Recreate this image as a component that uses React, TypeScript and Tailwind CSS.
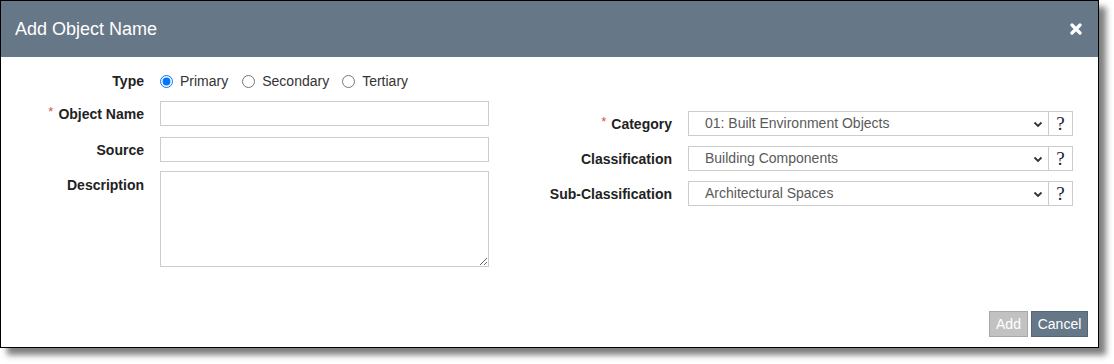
import React from "react"

const font = { fontFamily: '"Liberation Sans", Arial, sans-serif' }

const Label = ({ text, required }: { text: string; required?: boolean }) => (
  <label className="text-[14px] font-bold text-[#222] leading-4 whitespace-nowrap">
    {required && <span className="text-[#d9534f] font-normal mr-[5px] relative top-[-3px] text-[13px]">*</span>}
    {text}
  </label>
)

const Chevron = () => (
  <svg width="10" height="7" viewBox="0 0 10 7" className="absolute right-[6px] top-[10px] pointer-events-none">
    <path d="M1.5 1.5 L5 5 L8.5 1.5" stroke="#333" strokeWidth="1.8" fill="none" />
  </svg>
)

const SelectRow = ({ label, value, required }: { label: string; value: string; required?: boolean }) => (
  <div className="flex items-center h-[25px]">
    <div className="w-[152px] text-right pt-[1px]">
      <Label text={label} required={required} />
    </div>
    <div className="ml-[16px] relative w-[361px] h-[25px]">
      <select
        className="appearance-none w-full h-full border border-[#cccccc] bg-white pl-[16px] text-[14px] text-[#5a5a5a] outline-none"
        style={font}
        defaultValue={value}
      >
        <option>{value}</option>
      </select>
      <Chevron />
    </div>
    <div
      className="w-[24px] h-[25px] border border-l-0 border-[#cccccc] flex items-center justify-center text-[19px] leading-none text-[#1a1a3a]"
      style={{ fontFamily: '"Liberation Serif", "Times New Roman", serif' }}
    >
      ?
    </div>
  </div>
)

const Radio = ({ label, checked, gap }: { label: string; checked?: boolean; gap: string }) => (
  <label className={`flex items-center text-[14px] text-[#333] ${gap}`}>
    <input type="radio" name="type" defaultChecked={checked} className="w-[13px] h-[13px] m-0 mr-[7px]" />
    {label}
  </label>
)

export default function App() {
  return (
    <div className="w-[1114px] h-[364px] bg-white" style={font}>
      <div className="w-[1099px] h-[348px] border border-black bg-white flex flex-col shadow-[7px_7px_6px_rgba(0,0,0,0.5)]">
        <div className="h-[56px] bg-[#667788] flex items-center justify-between pl-[14px] pr-[16px] shrink-0">
          <h1 className="text-white text-[18px]">Add Object Name</h1>
          <svg width="12" height="12" viewBox="0 0 12 12">
            <path d="M2 2 L10 10 M10 2 L2 10" stroke="white" strokeWidth="3.2" strokeLinecap="round" />
          </svg>
        </div>

        <div className="flex flex-1">
          {/* left column */}
          <div className="flex flex-col pt-[14px]">
            <div className="flex items-center h-[20px]">
              <div className="w-[143px] text-right">
                <Label text="Type" />
              </div>
              <div className="flex items-center ml-[16px]">
                <Radio label="Primary" checked gap="mr-[14px]" />
                <Radio label="Secondary" gap="mr-[13px]" />
                <Radio label="Tertiary" gap="" />
              </div>
            </div>
            <div className="flex items-center h-[25px] mt-[10px]">
              <div className="w-[143px] text-right pt-[1px]">
                <Label text="Object Name" required />
              </div>
              <input className="ml-[16px] w-[329px] h-[25px] border border-[#cccccc] outline-none" />
            </div>
            <div className="flex items-center h-[25px] mt-[11px]">
              <div className="w-[143px] text-right">
                <Label text="Source" />
              </div>
              <input className="ml-[16px] w-[329px] h-[25px] border border-[#cccccc] outline-none" />
            </div>
            <div className="flex items-start mt-[9px]">
              <div className="w-[143px] text-right pt-[2px]">
                <Label text="Description" />
              </div>
              <textarea className="ml-[16px] w-[329px] h-[96px] border border-[#cccccc] outline-none resize" />
            </div>
          </div>

          {/* right column */}
          <div className="flex flex-col pt-[54px] ml-[31px] gap-[10px]">
            <SelectRow label="Category" value="01: Built Environment Objects" required />
            <SelectRow label="Classification" value="Building Components" />
            <SelectRow label="Sub-Classification" value="Architectural Spaces" />
          </div>
        </div>

        <div className="flex justify-end gap-[3px] pr-[10px] pb-[10px]">
          <button className="h-[26px] w-[39px] bg-[#c2c2c2] border border-[#a8a8a8] text-white text-[14px]">Add</button>
          <button className="h-[26px] w-[57px] bg-[#667788] border border-[#55667a] text-white text-[14px]">Cancel</button>
        </div>
      </div>
    </div>
  )
}
